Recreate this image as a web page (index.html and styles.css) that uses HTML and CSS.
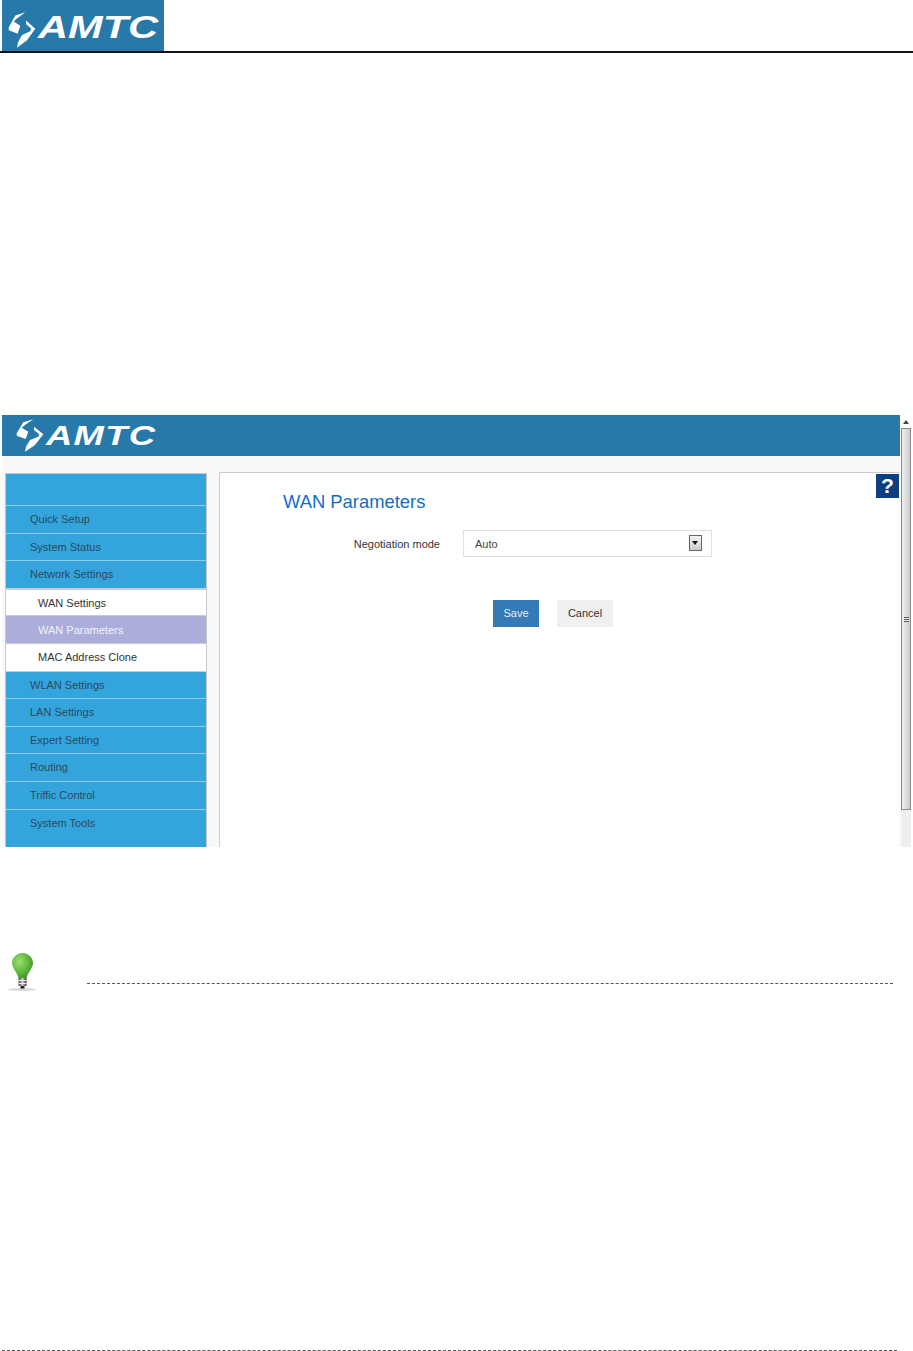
FILE: index.html
```html
<!DOCTYPE html>
<html>
<head>
  <title>WAN Parameters</title>
  <link rel="stylesheet" href="styles.css">
</head>
<body>
  <div class="page-header">
    <div class="page-logo">
      <svg class="swirl" viewBox="5 4 30 33" preserveAspectRatio="none">
        <path fill="#fff" d="M23.3 4.3 L13.3 7.3 L6.7 18.3 L6.7 20.7 L15.7 24 L18.3 16.7 L11.7 12.7 L15 10 Z"/>
        <path fill="#fff" d="M24 11.7 L33.3 19.3 L25 30 L15 36.7 L16 31.7 L20 25 L28.3 21.7 L29.3 19.3 L24 15 Z"/>
      </svg>
      <span class="logo-text">AMTC</span>
    </div>
  </div>

  <div class="shot">
    <div class="shot-main">
      <div class="banner">
        <svg class="swirl" viewBox="5 4 30 33">
          <path fill="#fff" d="M23.3 4.3 L13.3 7.3 L6.7 18.3 L6.7 20.7 L15.7 24 L18.3 16.7 L11.7 12.7 L15 10 Z"/>
          <path fill="#fff" d="M24 11.7 L33.3 19.3 L25 30 L15 36.7 L16 31.7 L20 25 L28.3 21.7 L29.3 19.3 L24 15 Z"/>
        </svg>
        <span class="logo-text">AMTC</span>
      </div>
      <div class="workspace">
        <div class="sidebar">
          <div class="menu-top"></div>
          <div class="menu-item">Quick Setup</div>
          <div class="menu-item">System Status</div>
          <div class="menu-item">Network Settings</div>
          <div class="sub-first sub-item">WAN Settings</div>
          <div class="sub-item sub-active">WAN Parameters</div>
          <div class="sub-item sub-last">MAC Address Clone</div>
          <div class="menu-item">WLAN Settings</div>
          <div class="menu-item">LAN Settings</div>
          <div class="menu-item">Expert Setting</div>
          <div class="menu-item">Routing</div>
          <div class="menu-item">Triffic Control</div>
          <div class="menu-item menu-end">System Tools</div>
        </div>
        <div class="content">
          <div class="help">?</div>
          <h2>WAN Parameters</h2>
          <div class="form-row">
            <label>Negotiation mode</label>
            <div class="select">
              <span>Auto</span>
              <span class="select-arrow"></span>
            </div>
          </div>
          <div class="buttons">
            <button class="btn-save">Save</button>
            <button class="btn-cancel">Cancel</button>
          </div>
        </div>
      </div>
    </div>
    <div class="scrollbar">
      <div class="scroll-up"></div>
      <div class="scroll-thumb"><div class="scroll-grip"></div></div>
    </div>
  </div>

  <div class="note">
    <svg class="bulb" viewBox="0 0 30 42">
      <defs>
        <radialGradient id="glass" cx="0.35" cy="0.35" r="0.75">
          <stop offset="0" stop-color="#9fdc78"/>
          <stop offset="0.55" stop-color="#5fbb3e"/>
          <stop offset="1" stop-color="#3a8c28"/>
        </radialGradient>
        <linearGradient id="base" x1="0" x2="1" y1="0" y2="0">
          <stop offset="0" stop-color="#444"/>
          <stop offset="0.5" stop-color="#ccc"/>
          <stop offset="1" stop-color="#333"/>
        </linearGradient>
      </defs>
      <ellipse cx="16" cy="37.5" rx="14" ry="1.4" fill="#d8d8d8"/>
      <path fill="url(#glass)" d="M16.5 1 C22 1 27 5.500 27 11 C27 16 22 20 20.500 26 L12.500 26 C11 20 6 16 6 11 C6 5.500 11 1 16.500 1 Z"/>
      <rect x="12.500" y="26" width="8" height="8" fill="url(#base)"/>
      <rect x="12.500" y="28" width="8" height="1" fill="#eee"/>
      <rect x="12.500" y="31" width="8" height="1" fill="#eee"/>
      <rect x="14.500" y="34" width="4" height="2.500" fill="#222"/>
    </svg>
    <div class="note-line"></div>
  </div>

  <div class="foot-line"></div>
</body>
</html>
```

FILE: styles.css
```css
body {
  font-family: 'Liberation Sans', Arial, sans-serif;
  background-color: #fff;
  margin: 0;
  padding: 0;
  overflow: hidden;
}
.page-header {
  height: 51px;
  border-bottom: 2px solid #111;
  padding-left: 2px;
}
.page-logo {
  width: 162px;
  height: 51px;
  background-color: #2779aa;
  display: flex;
  align-items: center;
  padding-left: 5px;
  box-sizing: border-box;
  overflow: hidden;
}
.page-logo .swirl {
  width: 30px;
  height: 36px;
  margin-top: 9px;
  flex-shrink: 0;
}
.page-logo .logo-text {
  margin-top: 3px;
}
.logo-text {
  color: #fff;
  font-size: 32px;
  line-height: 1;
  font-weight: bold;
  font-style: italic;
  letter-spacing: 0;
  margin-left: 1px;
  transform: scaleX(1.3);
  transform-origin: left center;
}
.shot {
  display: flex;
  margin: 362px 0 0 2px;
  width: 909px;
  height: 432px;
  overflow: hidden;
}
.shot-main {
  width: 898px;
  margin-right: 1px;
  background-color: #f8f8f8;
}
.banner {
  height: 41px;
  background-color: #2779aa;
  display: flex;
  align-items: center;
  padding-left: 13px;
}
.banner .swirl {
  width: 30px;
  height: 33px;
  flex-shrink: 0;
}
.banner .logo-text {
  font-size: 28px;
  letter-spacing: 1px;
  margin-left: 1px;
}
.workspace {
  display: flex;
  align-items: flex-start;
  padding: 16px 0 0 3px;
}
.sidebar {
  width: 202px;
  height: 374px;
  box-sizing: border-box;
  background-color: #33a5dc;
  border-top: 1px solid #c8c8c8;
  border-left: 1px solid #c8c8c8;
  border-right: 1px solid #c8c8c8;
  margin-top: 1px;
}
.menu-top {
  height: 31px;
  border-bottom: 1px solid #8ccbe8;
}
.menu-item {
  height: 26.6px;
  line-height: 27px;
  padding-left: 24px;
  font-size: 11px;
  color: #2c4a5e;
  border-bottom: 1px solid #8ccbe8;
}
.menu-end {
  border-bottom: none;
}
.sub-item {
  height: 26.6px;
  line-height: 28px;
  padding-left: 32px;
  font-size: 11px;
  color: #333;
  background-color: #fff;
  border-bottom: 1px solid #ccc;
}
.sub-first {
  border-top: 2px solid #ccc;
  margin-top: -1px;
  height: 25.6px;
  line-height: 26px;
}
.sub-active {
  background-color: #abaedb;
  color: #f2f2f8;
}
.sub-last {
  line-height: 26px;
}
.content {
  position: relative;
  width: 680px;
  height: 375px;
  margin-left: 12px;
  background-color: #fff;
  border-top: 1px solid #ccc;
  border-left: 1px solid #ccc;
  box-sizing: border-box;
}
.help {
  position: absolute;
  top: 1px;
  right: 0;
  width: 23px;
  height: 24px;
  background-color: #0c3f80;
  color: #fff;
  font-size: 21px;
  font-weight: bold;
  line-height: 24px;
  text-align: center;
}
h2 {
  margin: 17px 0 0 63px;
  font-size: 18.4px;
  line-height: 24px;
  font-weight: normal;
  color: #0f6fc6;
}
.form-row {
  display: flex;
  align-items: center;
  margin-top: 16px;
}
.form-row label {
  width: 220px;
  text-align: right;
  font-size: 11px;
  color: #333;
}
.select {
  display: flex;
  align-items: center;
  justify-content: space-between;
  box-sizing: border-box;
  width: 249px;
  height: 27px;
  margin-left: 23px;
  padding: 1px 9px 0 11px;
  border: 1px solid #e0e0e0;
  font-size: 11px;
  color: #444;
  background-color: #fff;
}
.select-arrow {
  width: 11px;
  height: 14px;
  margin-top: -2px;
  border: 1px solid #666;
  background: linear-gradient(#f4f4f4, #ccc);
  position: relative;
}
.select-arrow:after {
  content: "";
  position: absolute;
  left: 2px;
  top: 5px;
  border-left: 3px solid transparent;
  border-right: 3px solid transparent;
  border-top: 4px solid #111;
}
.buttons {
  display: flex;
  gap: 18px;
  margin: 43px 0 0 273px;
}
.buttons button {
  height: 27px;
  border: none;
  padding: 0 0 1px;
  font-family: 'Liberation Sans', Arial, sans-serif;
  font-size: 11px;
}
.btn-save {
  width: 46px;
  background-color: #337ab7;
  color: #e8eef5;
}
.btn-cancel {
  width: 56px;
  background-color: #f0f0f0;
  color: #333;
}
.scrollbar {
  width: 10px;
  background-color: #eee;
}
.scroll-up {
  height: 13px;
  background-color: #fff;
  position: relative;
}
.scroll-up:after {
  content: "";
  position: absolute;
  left: 2px;
  top: 5px;
  border-left: 3px solid transparent;
  border-right: 3px solid transparent;
  border-bottom: 4px solid #444;
}
.scroll-thumb {
  height: 382px;
  box-sizing: border-box;
  border: 1px solid #888;
  background: linear-gradient(90deg, #f0f0f0, #ccc);
  display: flex;
  align-items: center;
  justify-content: center;
}
.scroll-grip {
  width: 5px;
  height: 5px;
  background: repeating-linear-gradient(#555 0, #555 1px, #eee 1px, #eee 2px);
}
.note {
  display: flex;
  align-items: flex-start;
  margin: 105px 0 0 6px;
}
.bulb {
  width: 30px;
  height: 42px;
}
.note-line {
  width: 806px;
  margin: 31px 0 0 51px;
  border-top: 1px dashed #555;
}
.foot-line {
  width: 895px;
  margin: 356px 0 0 2px;
  border-top: 1px dashed #555;
}
```
